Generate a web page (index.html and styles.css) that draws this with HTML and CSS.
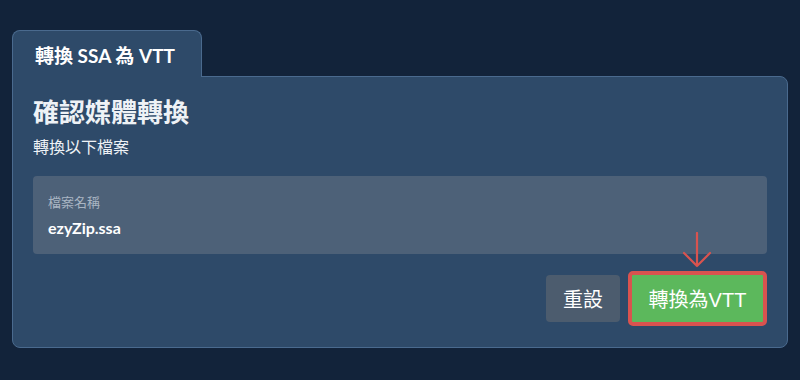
FILE: index.html
```html
<!DOCTYPE html>
<html lang="zh-Hant">
<head>
  <meta charset="UTF-8">
  <title>轉換 SSA 為 VTT</title>
  <link rel="stylesheet" href="styles.css">
</head>
<body>
  <div class="wrap">
    <div class="tab">轉換 SSA 為 VTT</div>
    <div class="panel">
      <h2>確認媒體轉換</h2>
      <p class="sub">轉換以下檔案</p>
      <div class="file-box">
        <div class="label">檔案名稱</div>
        <div class="name">ezyZip.ssa</div>
      </div>
      <div class="buttons">
        <button class="reset-btn">重設</button>
        <div class="convert-wrap">
          <svg class="arrow" width="30" height="36" viewBox="0 0 30 36">
            <path d="M15 1 V34 M2 21 L15 34 L28 21" fill="none" stroke="#d9534f" stroke-width="2.2" stroke-linecap="round" stroke-linejoin="round"/>
          </svg>
          <button class="convert-btn">轉換為VTT</button>
        </div>
      </div>
    </div>
  </div>
</body>
</html>
```

FILE: styles.css
```css
* {
  box-sizing: border-box;
}

body {
  margin: 0;
  background: #12233a;
  font-family: Lato, "Noto Sans CJK TC", sans-serif;
  color: #fff;
}

.wrap {
  padding: 30px 12px 0 12px;
}

.tab {
  display: inline-block;
  width: 190px;
  height: 47px;
  margin-bottom: -1px;
  padding: 13px 0 0 22px;
  background: #2e4a69;
  border: 1px solid #4a6a8e;
  border-bottom: none;
  border-radius: 8px 8px 0 0;
  font-size: 19px;
  line-height: 24px;
  font-weight: bold;
  position: relative;
  z-index: 1;
}

.panel {
  background: #2e4a69;
  border: 1px solid #4a6a8e;
  border-radius: 0 8px 8px 8px;
  padding: 19px 20px 21px 20px;
  height: 272px;
}

h2 {
  margin: 0;
  font-size: 26px;
  font-weight: bold;
  line-height: 32px;
  color: #eef2f6;
}

.sub {
  margin: 9px 0 0 0;
  font-size: 16px;
  line-height: 20px;
  color: #eef2f6;
}

.file-box {
  margin-top: 19px;
  height: 78px;
  background: #4d6178;
  border-radius: 4px;
  padding: 17px 15px 0 15px;
}

.label {
  font-size: 13px;
  color: #a9b5c3;
  line-height: 18px;
}

.name {
  margin-top: 7px;
  font-size: 16px;
  font-weight: bold;
  line-height: 20px;
}

.buttons {
  display: flex;
  justify-content: flex-end;
  align-items: center;
  gap: 8px;
  margin-top: 17px;
}

.buttons button {
  font-family: "Liberation Sans", "Noto Sans CJK TC", sans-serif;
  color: #fff;
  border: none;
  cursor: pointer;
}

.reset-btn {
  width: 74px;
  height: 47px;
  background: #4c5c6e;
  border-radius: 4px;
  font-size: 20px;
}

.convert-wrap {
  position: relative;
}

.arrow {
  position: absolute;
  left: 54px;
  top: -39px;
}

.convert-btn {
  width: 139px;
  height: 55px;
  background: #5cb85c;
  border: 4px solid #d9534f !important;
  border-radius: 5px;
  font-size: 20px;
}
```
